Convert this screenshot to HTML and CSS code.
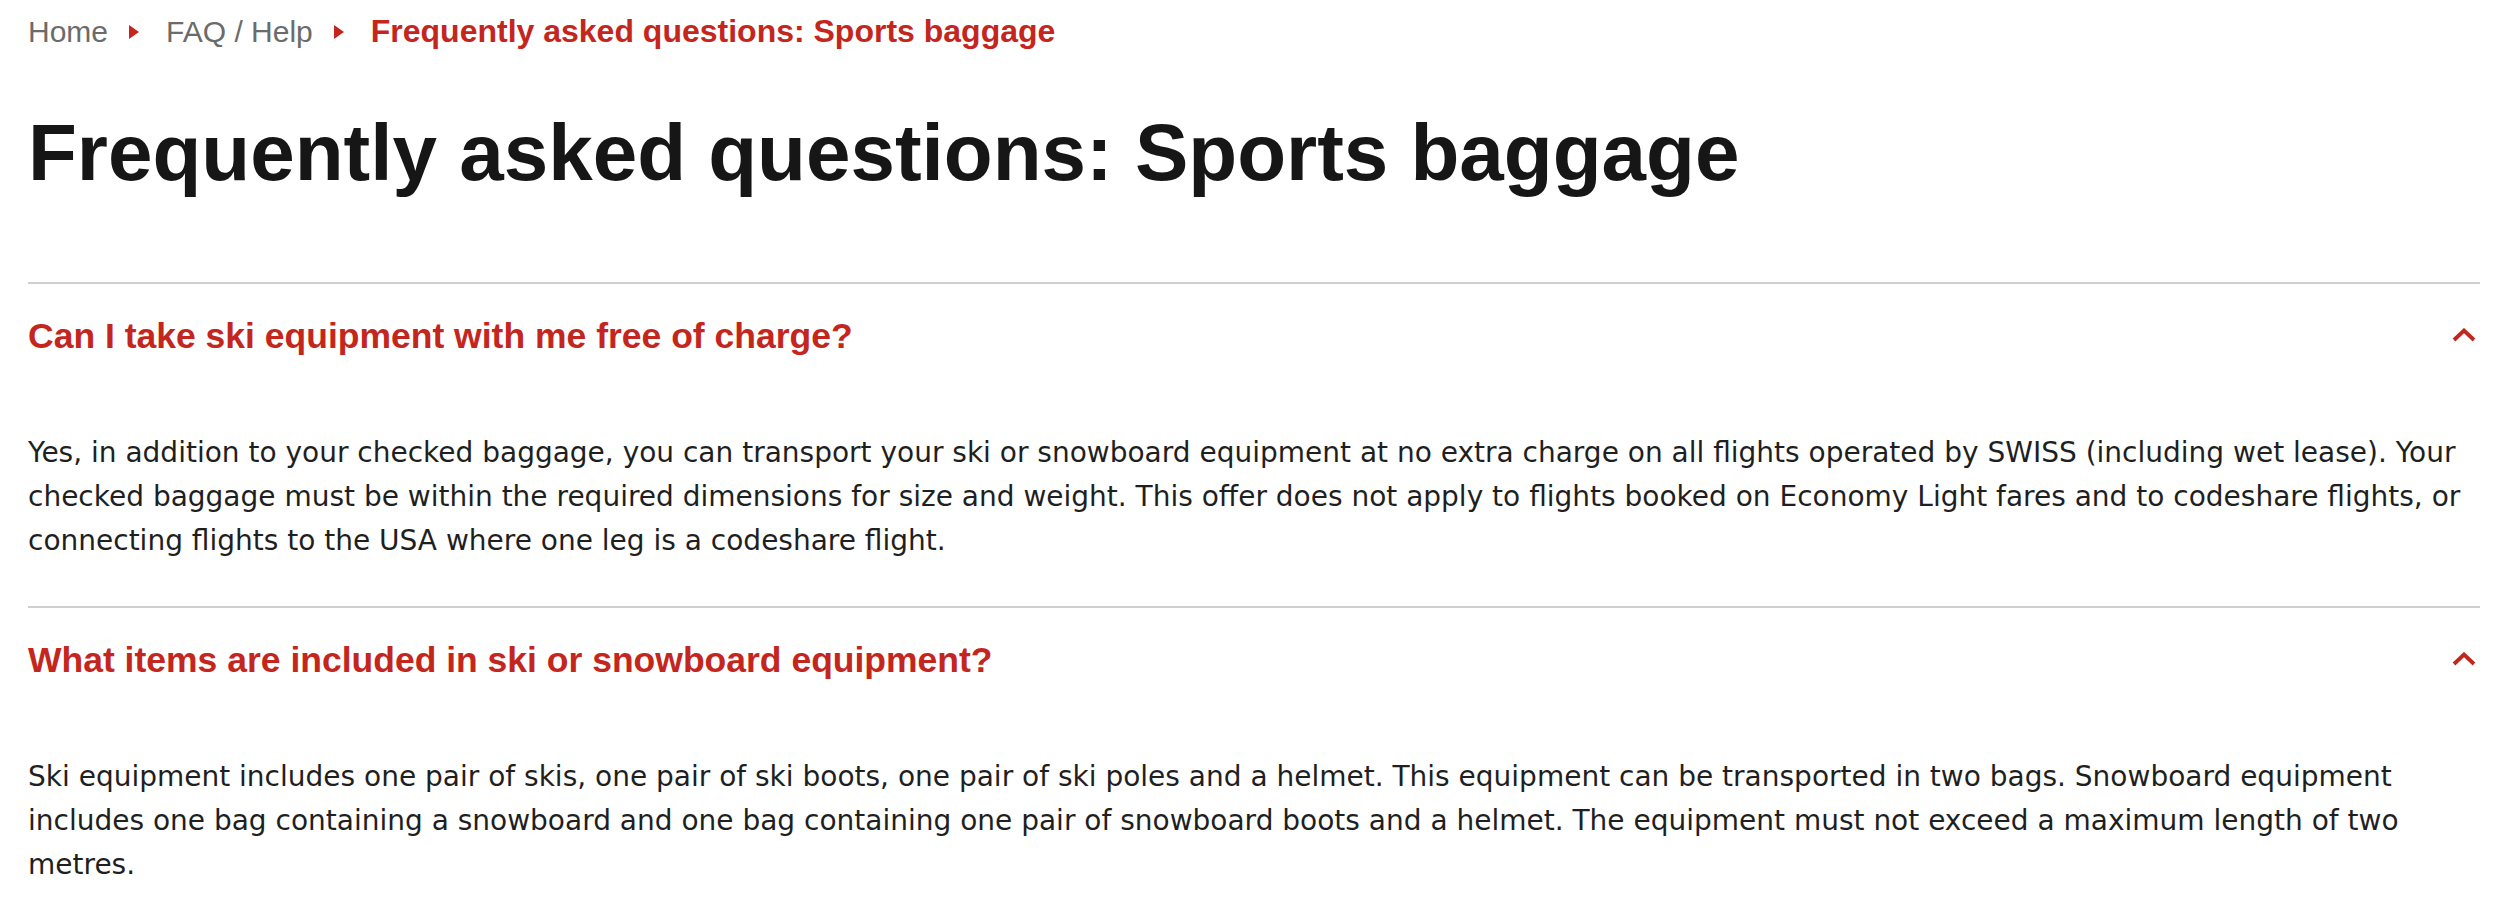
FILE: index.html
```html
<!DOCTYPE html>
<html lang="en">
<head>
<meta charset="utf-8">
<title>Frequently asked questions: Sports baggage</title>
<link rel="stylesheet" href="styles.css">
</head>
<body>
<main class="page">
  <nav class="crumbs" aria-label="Breadcrumb">
    <a class="crumb" href="#">Home</a>
    <span class="sep" aria-hidden="true"></span>
    <a class="crumb" href="#">FAQ / Help</a>
    <span class="sep" aria-hidden="true"></span>
    <span class="crumb current">Frequently asked questions: Sports baggage</span>
  </nav>

  <h1 class="title">Frequently asked questions: Sports baggage</h1>

  <section class="faq">
    <div class="item">
      <div class="question">
        <h2 class="q-text">Can I take ski equipment with me free of charge?</h2>
        <svg class="chevron" width="24" height="14" viewBox="0 0 24 14" aria-hidden="true"><polyline points="2,12 12,2.5 22,12" fill="none" stroke="currentColor" stroke-width="3.8"/></svg>
      </div>
      <p class="answer">Yes, in addition to your checked baggage, you can transport your ski or snowboard equipment at no extra charge on all flights operated by SWISS (including wet lease). Your checked baggage must be within the required dimensions for size and weight. This offer does not apply to flights booked on Economy Light fares and to codeshare flights, or connecting flights to the USA where one leg is a codeshare flight.</p>
    </div>
    <div class="item">
      <div class="question">
        <h2 class="q-text">What items are included in ski or snowboard equipment?</h2>
        <svg class="chevron" width="24" height="14" viewBox="0 0 24 14" aria-hidden="true"><polyline points="2,12 12,2.5 22,12" fill="none" stroke="currentColor" stroke-width="3.8"/></svg>
      </div>
      <p class="answer">Ski equipment includes one pair of skis, one pair of ski boots, one pair of ski poles and a helmet. This equipment can be transported in two bags. Snowboard equipment includes one bag containing a snowboard and one bag containing one pair of snowboard boots and a helmet. The equipment must not exceed a maximum length of two metres.</p>
    </div>
  </section>
</main>
</body>
</html>
```

FILE: styles.css
```css
html, body {
  margin: 0;
  padding: 0;
  background: #ffffff;
}

body {
  font-family: "Liberation Sans", Arial, sans-serif;
  color: #1a1a1a;
}

.page {
  padding: 9px 20px 0 28px;
}

/* Breadcrumb */
.crumbs {
  display: flex;
  align-items: center;
  height: 45px;
  font-size: 30px;
  line-height: 45px;
}

.crumb {
  color: #6b6b6b;
  text-decoration: none;
}

.crumb.current {
  color: #c4261d;
  font-weight: bold;
  font-size: 32px;
}

.sep {
  width: 0;
  height: 0;
  border-left: 10px solid #c4261d;
  border-top: 7px solid transparent;
  border-bottom: 7px solid transparent;
  margin: 0 27px 0 21px;
}

/* Title */
.title {
  margin: 51px 0 81px;
  font-size: 80px;
  line-height: 96px;
  font-weight: bold;
  color: #161616;
}

/* FAQ accordion */
.faq {
  display: flex;
  flex-direction: column;
}

.item {
  border-top: 2px solid #cfcfcf;
  padding-bottom: 43px;
}

.question {
  display: flex;
  align-items: center;
  justify-content: space-between;
  padding-top: 31px;
}

.q-text {
  margin: 0;
  font-size: 35.5px;
  line-height: 43px;
  font-weight: bold;
  color: #c4261d;
}

.chevron {
  color: #c4261d;
  margin-right: 4px;
  margin-top: -4px;
}

.answer {
  margin: 73px 0 0;
  font-family: "DejaVu Sans", Verdana, sans-serif;
  font-size: 28px;
  line-height: 44px;
  color: #1f1f1f;
}
```
